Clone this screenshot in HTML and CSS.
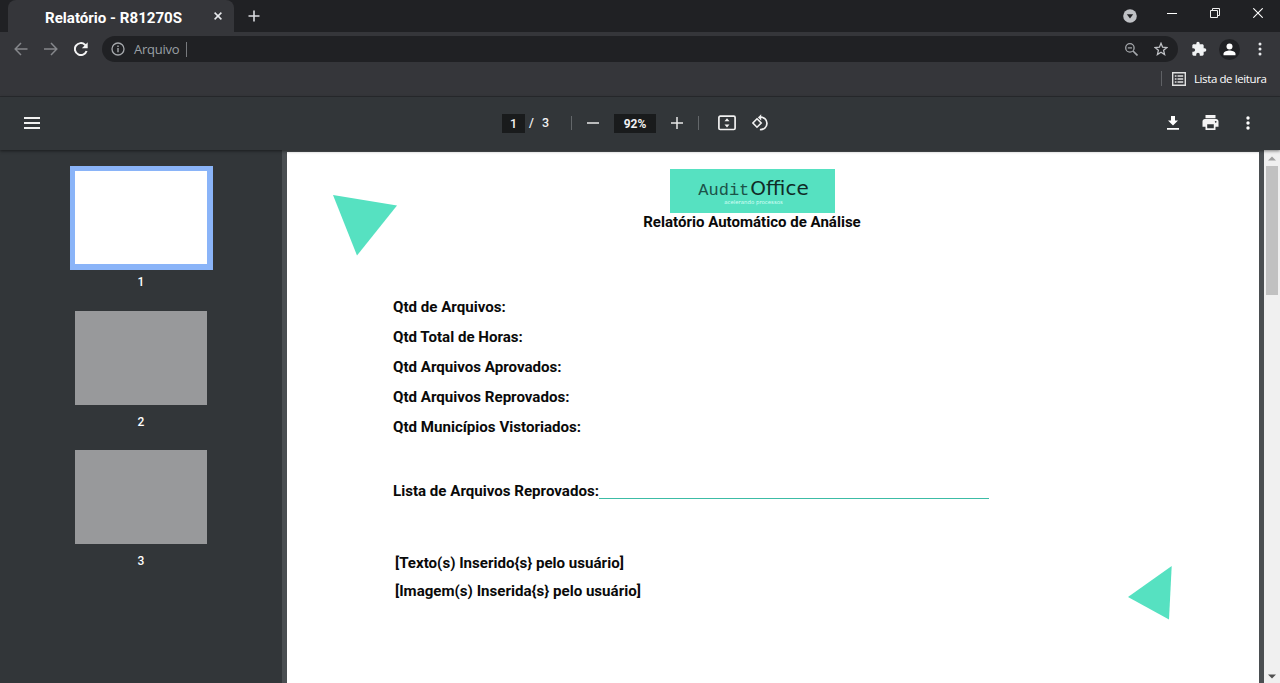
FILE: index.html
```html
<!DOCTYPE html>
<html lang="pt-BR">
<head>
<meta charset="utf-8">
<title>Relatório - R81270S</title>
<link rel="stylesheet" href="styles.css">
</head>
<body>
<div class="browser">
  <header class="tabstrip">
    <div class="tab">
      <span class="tab-title">Relatório - R81270S</span>
      <svg class="tab-close" width="8" height="8" viewBox="0 0 8 8"><path d="M.6.6l6.8 6.8M7.4.6L.6 7.4" stroke="#e8eaed" stroke-width="1.5"/></svg>
    </div>
    <svg class="new-tab" width="12" height="12" viewBox="0 0 12 12"><path d="M6 .5v11M.5 6h11" stroke="#dadce0" stroke-width="1.6"/></svg>
    <div class="window-controls">
      <svg width="14" height="14" viewBox="0 0 14 14"><circle cx="7" cy="7" r="6.8" fill="#bfc1c5"/><path d="M3.8 5.2h6.4L7 9.4z" fill="#202124"/></svg>
      <svg class="minimize" width="10" height="10" viewBox="0 0 10 10"><path d="M0 4.500h10" stroke="#fff"/></svg>
      <svg class="restore" width="10" height="10" viewBox="0 0 10 10"><path d="M.5 2.5h7v7h-7zM2.5 2.5v-2h7v7h-2" fill="none" stroke="#eee"/></svg>
      <svg class="close" width="10" height="10" viewBox="0 0 10 10"><path d="M.3.3l9.4 9.4M9.7.3L.3 9.7" stroke="#fff" stroke-width="1.1"/></svg>
    </div>
  </header>
  <nav class="navbar">
    <svg class="back" width="14" height="14" viewBox="0 0 14 14"><path d="M13.500 7H1.5M7 1L1.2 7 7 13" fill="none" stroke="#85878b" stroke-width="1.5"/></svg>
    <svg class="forward" width="14" height="14" viewBox="0 0 14 14"><path d="M0 7h12.5M7 1l5.800 6L7 13" fill="none" stroke="#85878b" stroke-width="1.5"/></svg>
    <svg class="reload" width="14" height="14" viewBox="0 0 14 14"><path d="M12.600 9A6 6 0 1 1 11 2.700l.8.9" fill="none" stroke="#f4f4f4" stroke-width="2"/><path d="M13.700.3v5.900H7.900z" fill="#f4f4f4"/></svg>
    <div class="omnibox">
      <svg width="14" height="14" viewBox="0 0 14 14"><circle cx="7" cy="7" r="6" fill="none" stroke="#a5a8ac" stroke-width="1.300"/><path d="M7 6v4.200M7 3.500v1.500" stroke="#a5a8ac" stroke-width="1.400"/></svg>
      <span class="address">Arquivo</span><span class="caret"></span>
      <svg class="zoom-out" width="13" height="13" viewBox="0 0 13 13"><circle cx="4.900" cy="4.900" r="4.200" fill="none" stroke="#a5a8ac" stroke-width="1.300"/><path d="M8 8l4.500 4.500" stroke="#a5a8ac" stroke-width="1.700"/><path d="M2.800 4.900H7" stroke="#a5a8ac" stroke-width="1.200"/></svg>
      <svg class="star" width="14" height="14" viewBox="0 0 14 14"><path d="M7 1.300l1.600 3.900 4.300.35-3.300 2.800 1 4.200L7 10.300l-3.600 2.250 1-4.200L1.100 5.550l4.300-.35z" fill="none" stroke="#bfc1c5" stroke-width="1.300"/></svg>
    </div>
    <svg class="extensions" width="16" height="16" viewBox="0 0 24 24"><path fill="#f1f3f4" d="M20.500 11H19V7c0-1.100-.9-2-2-2h-4V3.500a2.500 2.500 0 0 0-5 0V5H4c-1.100 0-2 .9-2 2v3.800h1.500a2.700 2.700 0 0 1 0 5.400H2V20c0 1.100.9 2 2 2h3.800v-1.500a2.700 2.700 0 0 1 5.400 0V22H17c1.100 0 2-.9 2-2v-4h1.500a2.500 2.500 0 0 0 0-5z"/></svg>
    <svg class="profile" width="21" height="21" viewBox="0 0 21 21"><circle cx="10.500" cy="10.500" r="10.500" fill="#202124"/><circle cx="10.500" cy="7.500" r="3" fill="#fff"/><path d="M4.500 16.200v-1.500c0-2 4-3.100 6-3.100s6 1.100 6 3.100v1.500z" fill="#fff"/></svg>
    <svg class="menu" width="4" height="14" viewBox="0 0 4 14"><g fill="#e8eaed"><circle cx="2" cy="2" r="1.500"/><circle cx="2" cy="7" r="1.500"/><circle cx="2" cy="12" r="1.500"/></g></svg>
  </nav>
  <div class="bookmarks">
    <span class="bookmark-divider"></span>
    <svg width="14" height="14" viewBox="0 0 14 14"><path d="M.7.7h12.600v12.600H.7z" fill="none" stroke="#e0e0e0" stroke-width="1.400"/><path d="M2.800 4h1.700M2.800 7h1.700M2.800 10h1.700M5.500 4h5.700M5.500 7h5.700M5.500 10h5.700" stroke="#e0e0e0" stroke-width="1.500"/></svg>
    <span class="reading-list">Lista de leitura</span>
  </div>
  <div class="pdf-toolbar">
    <svg class="hamburger" width="16" height="12" viewBox="0 0 16 12"><path d="M0 1h16M0 6h16M0 11h16" stroke="#f1f1f1" stroke-width="1.900"/></svg>
    <div class="pdf-controls">
      <span class="field page-field">1</span>
      <span class="page-total"><span>/</span><span>3</span></span>
      <span class="divider first"></span>
      <svg width="12" height="12" viewBox="0 0 12 12"><path d="M0 6h12" stroke="#e8e8e8" stroke-width="1.500"/></svg>
      <span class="field zoom-field">92%</span>
      <svg width="12" height="12" viewBox="0 0 12 12"><path d="M0 6h12M6 0v12" stroke="#e8e8e8" stroke-width="1.500"/></svg>
      <span class="divider second"></span>
      <svg class="fit" width="18" height="16" viewBox="0 0 18 16"><rect x=".9" y="1.200" width="16.200" height="13.300" rx="1.300" fill="none" stroke="#f1f1f1" stroke-width="1.700"/><path d="M9 3.300l2.500 2.900h-5zM9 12.500L6.500 9.600h5z" fill="#f1f1f1"/></svg>
      <svg class="rotate" width="17" height="18" viewBox="0 0 17 18"><path d="M5 4.800L9.200 9 5 13.200.9 9z" fill="none" stroke="#f1f1f1" stroke-width="1.600"/><path d="M8 3.200a6.200 6.200 0 1 1-.1 12.300" fill="none" stroke="#f1f1f1" stroke-width="1.700"/><path d="M9.200.2v6.400L5.900 3.400z" fill="#f1f1f1"/></svg>
    </div>
    <div class="pdf-actions">
      <svg width="12" height="14" viewBox="0 0 12 14"><path d="M4 0h4v4.500h3L6 9.500 1 4.500h3zM0 12h12v1.800H0z" fill="#fff"/></svg>
      <svg class="print" width="17" height="16" viewBox="0 0 17 16"><path d="M3.500 0h10v3.200h-10zM3 4h11c1.500 0 2.500 1 2.500 2.500v5.200h-3V15h-10v-3.300h-3V6.500C.5 5 1.500 4 3 4zm2.200 5.200v4.100h6.600V9.200zM13.700 6a.8.8 0 1 0 .01 0z" fill="#f4f4f4" fill-rule="evenodd"/></svg>
      <svg width="4" height="14" viewBox="0 0 4 14"><g fill="#fff"><circle cx="2" cy="2" r="1.700"/><circle cx="2" cy="7" r="1.700"/><circle cx="2" cy="12" r="1.700"/></g></svg>
    </div>
  </div>
  <main class="viewer">
    <aside class="thumbnails">
      <div class="thumb selected"></div><span class="thumb-label">1</span>
      <div class="thumb"></div><span class="thumb-label">2</span>
      <div class="thumb"></div><span class="thumb-label">3</span>
    </aside>
    <article class="page">
      <svg class="triangle top" width="64" height="61" viewBox="0 0 64 61"><path d="M0 0l64 10.500L24 60.500z" fill="#56e1c1"/></svg>
      <div class="report-head">
        <div class="logo">
          <div class="logo-name"><span class="audit">Audit</span><span class="office">Office</span></div>
          <span class="tagline">acelerando processos</span>
        </div>
        <h1 class="report-title">Relatório Automático de Análise</h1>
      </div>
      <div class="stats">
        <p>Qtd de Arquivos:</p>
        <p>Qtd Total de Horas:</p>
        <p>Qtd Arquivos Aprovados:</p>
        <p>Qtd Arquivos Reprovados:</p>
        <p>Qtd Municípios Vistoriados:</p>
      </div>
      <div class="rejected"><span>Lista de Arquivos Reprovados:</span><span class="rule"></span></div>
      <div class="inserted">
        <p>[Texto(s) Inserido{s} pelo usuário]</p>
        <p>[Imagem(s) Inserida{s} pelo usuário]</p>
      </div>
      <svg class="triangle bottom" width="44" height="54" viewBox="0 0 44 54"><path d="M43.700 0L0 31l41 22.500z" fill="#56e1c1"/></svg>
    </article>
    <div class="scrollbar">
      <svg width="8" height="5" viewBox="0 0 8 5"><path d="M0 4.500L4 .5l4 4z" fill="#a0a0a0"/></svg>
      <div class="scroll-thumb"></div>
      <svg class="scroll-down" width="8" height="5" viewBox="0 0 8 5"><path d="M0 .5l4 4 4-4z" fill="#505050"/></svg>
    </div>
  </main>
</div>
</body>
</html>
```
FILE: styles.css
```css
* { box-sizing: border-box; }
body { margin: 0; background: #323639; font-family: Roboto, sans-serif; }
p, h1 { margin: 0; }
svg { display: block; flex: none; }
.browser { width: 1280px; height: 683px; overflow: hidden; display: flex; flex-direction: column; }

.tabstrip { height: 32px; flex: none; display: flex; background: #202124; padding-left: 8px; }
.tab { width: 226px; background: #35363a; border-radius: 8px 8px 0 0; display: flex; align-items: center; padding: 2px 12px 0 37px; justify-content: space-between; }
.tab-title { color: #fff; font-size: 15.100px; font-weight: 700; white-space: nowrap; padding-top: 1px; }
.tab-close { margin-bottom: 2px; }
.new-tab { margin: 10px 0 0 14px; }
.window-controls { display: flex; margin: 9px 17px 0 auto; }
.minimize { margin: 0 0 0 30px; }
.restore { margin-left: 33px; margin-top: -1px; }
.close { margin-left: 33px; margin-top: -1px; }

.navbar { height: 34px; flex: none; display: flex; align-items: center; background: #35363a; padding-left: 14px; }
.forward { margin-left: 16px; }
.reload { margin-left: 16px; }
.omnibox { width: 1076px; height: 26px; margin-left: 14px; border-radius: 13px; background: #202124; display: flex; align-items: center; padding: 0 10px 0 9px; }
.address { margin-left: 9px; font: 13px "Open Sans", sans-serif; letter-spacing: -.25px; color: #9aa0a6; }
.caret { width: 1px; height: 15px; background: #77797d; margin-left: 7px; }
.zoom-out { margin-left: auto; }
.star { margin-left: 16px; }
.extensions { margin-left: 13px; }
.profile { margin-left: 12px; }
.menu { margin-left: 18px; }

.bookmarks { height: 31px; flex: none; background: #35363a; border-bottom: 1px solid #292b2e; display: flex; align-items: center; justify-content: flex-end; padding: 0 13px 5px 0; color: #fff; font: 11.500px "Open Sans", sans-serif; gap: 8px; }
.bookmark-divider { width: 1px; height: 15px; background: #5f6165; margin-right: 2px; }
.reading-list { width: 73px; letter-spacing: -.4px; white-space: nowrap; margin-top: -1px; }

.pdf-toolbar { height: 53px; flex: none; display: flex; align-items: center; position: relative; z-index: 1; background: #323639; padding: 0 30px 1px 24px; box-shadow: 0 1px 3px rgba(0, 0, 0, .5); }
.pdf-controls { margin-left: 462px; display: flex; align-items: center; color: #f1f1f1; font-size: 12.500px; font-weight: 500; }
.field { background: #191b1c; height: 19px; display: flex; align-items: center; justify-content: center; }
.page-field { width: 23px; }
.page-total { width: 46px; display: flex; gap: 8px; padding: 0 0 1px 4px; }
.divider { width: 1px; height: 14px; background: #63676a; }
.divider.first { margin-right: 15px; }
.zoom-field { width: 42px; margin: 0 15px; padding-top: 1px; font-size: 12px; font-weight: 700; }
.divider.second { margin-left: 15px; }
.fit { margin-left: 19px; }
.rotate { margin-left: 16px; }
.pdf-actions { margin-left: auto; display: flex; align-items: center; }
.print { margin: 0 27px 0 23px; }

.viewer { flex: 1; display: flex; background: #4a4e51; min-height: 0; }
.thumbnails { width: 282px; background: #323639; display: flex; flex-direction: column; align-items: center; padding-top: 22px; }
.thumb { width: 132px; height: 94px; flex: none; background: #98999b; }
.thumb.selected { width: 143px; height: 104px; margin: -6px 0 0; background: #fff; border: 5px solid #8ab4f8; border-bottom-width: 6px; border-right-width: 6px; }
.thumb-label { height: 45px; flex: none; padding-top: 10px; line-height: 15px; font-size: 12px; font-weight: 500; color: #fff; }
.thumb.selected + .thumb-label { height: 41px; padding-top: 5px; }
.page { width: 972px; margin: 2px 5px 0; background: #fff; position: relative; color: #0a0a0a; font-size: 15.100px; font-weight: 700; flex: none; }
.report-head { display: flex; flex-direction: column; align-items: center; padding: 17px 42px 0 0; }
.logo { width: 165px; height: 44px; background: #56e1c1; display: flex; flex-direction: column; align-items: center; padding: 9px 0 0 3px; font-weight: 400; }
.logo-name { display: flex; align-items: baseline; height: 21px; color: #102b27; }
.audit { font: 17px/18px "Liberation Mono", monospace; color: #1c5349; }
.office { font: 20px/20px "DejaVu Sans", sans-serif; margin-left: 1px; }
.tagline { font: 5.400px/6px "DejaVu Sans", sans-serif; color: #d5fff5; }
.report-title { font-size: 15.050px; line-height: 18px; white-space: nowrap; }
.stats { padding: 61px 0 0 106px; line-height: 30px; }
.rejected { display: flex; height: 30px; margin: 34px 0 0 106px; line-height: 30px; }
.rule { width: 390px; height: 1px; margin-top: 22px; background: #3cbca6; }
.inserted { margin: 43px 0 0 108px; line-height: 28px; }
.triangle { position: absolute; }
.triangle.top { left: 46px; top: 43px; }
.triangle.bottom { left: 841px; top: 414px; }
.scrollbar { width: 16px; background: #f0f0f0; display: flex; flex-direction: column; align-items: center; padding: 6px 0 4px; }
.scroll-thumb { width: 12px; height: 129px; background: #c1c1c1; margin-top: 5px; }
.scroll-down { margin-top: auto; }
```
